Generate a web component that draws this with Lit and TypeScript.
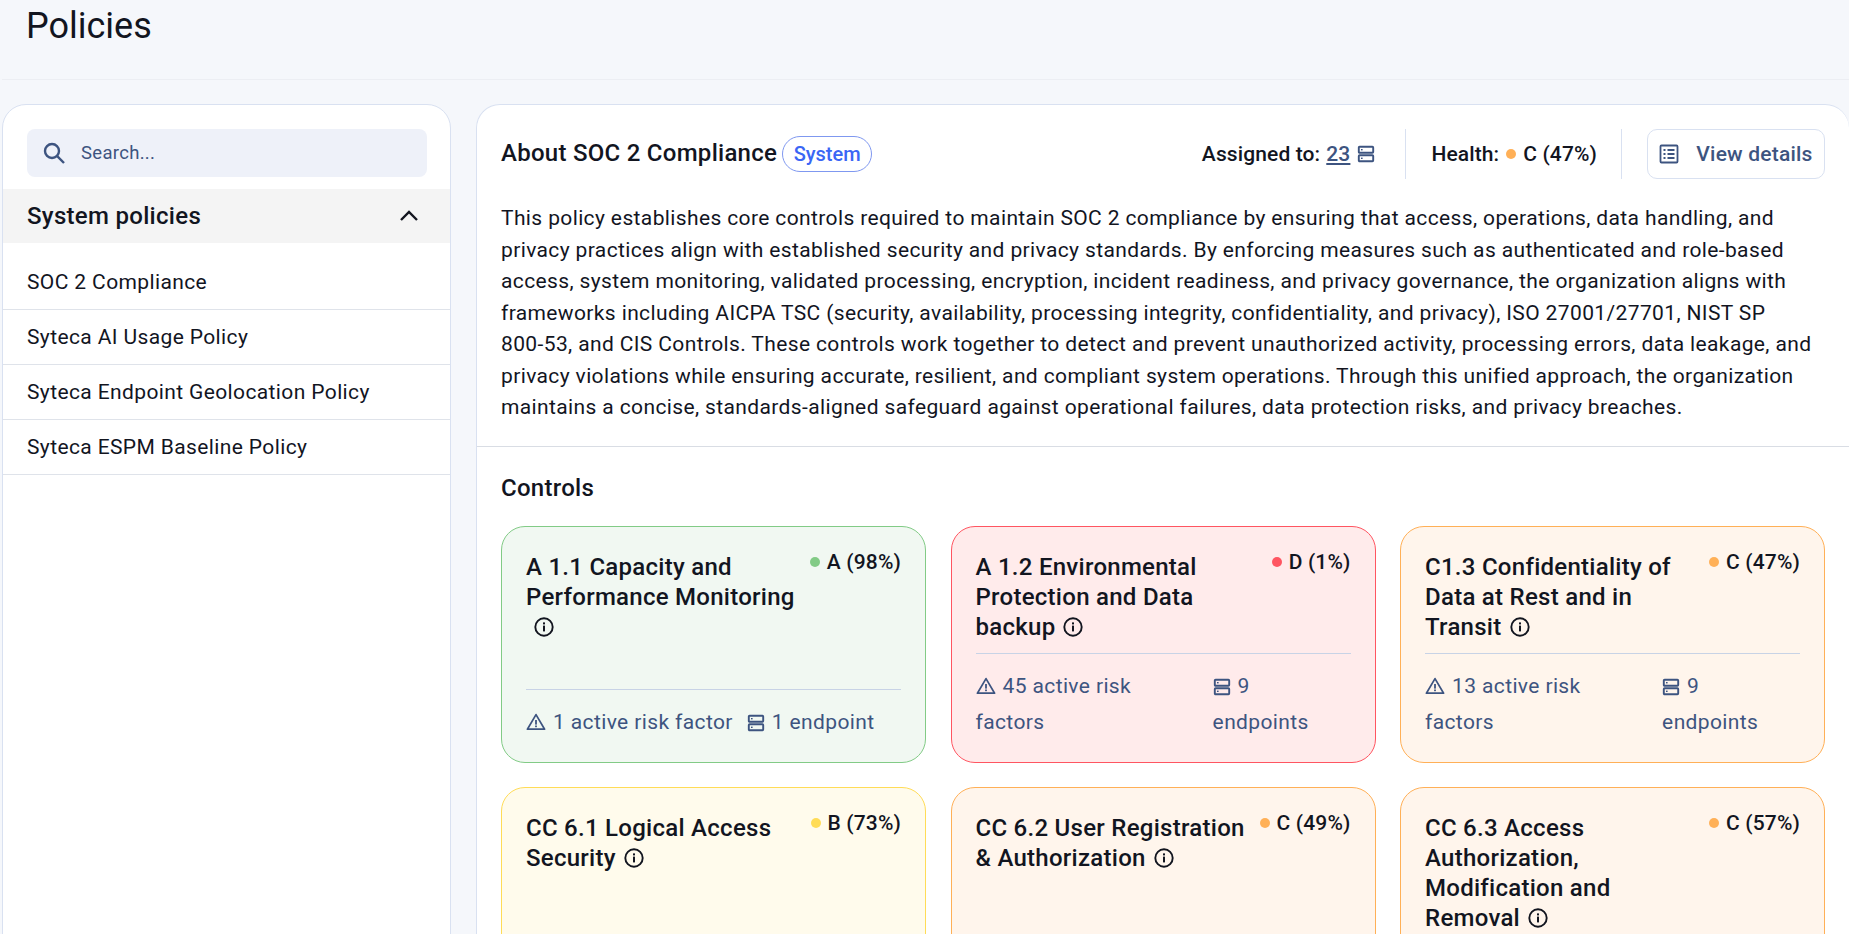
import { LitElement, html, css } from "lit";
import { customElement } from "lit/decorators.js";

const infoIcon = html`<svg class="info" viewBox="0 0 20 20" width="20" height="20" fill="none"><circle cx="10" cy="10" r="8.7" stroke="currentColor" stroke-width="1.9"/><rect x="9" y="8.6" width="2" height="5.8" fill="currentColor"/><rect x="9" y="5.4" width="2" height="2" fill="currentColor"/></svg>`;
const warnIcon = html`<svg class="mi" viewBox="0 0 20 20" width="20" height="20" fill="none"><path d="M10 2.6 L18.6 17.2 H1.4 Z" stroke="currentColor" stroke-width="1.7" stroke-linejoin="round"/><rect x="9.1" y="8" width="1.8" height="4.6" fill="currentColor"/><rect x="9.1" y="13.5" width="1.8" height="1.7" fill="currentColor"/></svg>`;
const serverIcon = html`<svg class="mi" viewBox="0 0 18 18" width="18" height="18" fill="none"><rect x="1.8" y="1.8" width="14.4" height="5.9" rx=".8" stroke="currentColor" stroke-width="1.9"/><rect x="1.8" y="10.3" width="14.4" height="5.9" rx=".8" stroke="currentColor" stroke-width="1.9"/><rect x="4" y="4" width="1.6" height="1.4" fill="currentColor"/><rect x="4" y="12.6" width="1.6" height="1.4" fill="currentColor"/></svg>`;

interface Ctl { t: string; g: string; c: string; r?: string; e?: string; }
const controls: Ctl[] = [
  { t: "A 1.1 Capacity and Performance Monitoring", g: "A (98%)", c: "a", r: "1 active risk factor", e: "1 endpoint" },
  { t: "A 1.2 Environmental Protection and Data backup", g: "D (1%)", c: "d", r: "45 active risk factors", e: "9 endpoints" },
  { t: "C1.3 Confidentiality of Data at Rest and in Transit", g: "C (47%)", c: "c", r: "13 active risk factors", e: "9 endpoints" },
  { t: "CC 6.1 Logical Access Security", g: "B (73%)", c: "b" },
  { t: "CC 6.2 User Registration & Authorization", g: "C (49%)", c: "c" },
  { t: "CC 6.3 Access Authorization, Modification and Removal", g: "C (57%)", c: "c" },
];

@customElement("app-root")
export class AppRoot extends LitElement {
  static styles = css`
    :host { display: block; height: 934px; overflow: hidden; background: #f5f7fb; font-family: Roboto, "Liberation Sans", sans-serif; color: #12151f; }
    * { box-sizing: border-box; }
    .top { height: 80px; margin-left: 2px; border-bottom: 1px solid #eceef3; padding: 4px 0 0 24px; }
    h1 { margin: 0; font-size: 36px; line-height: 44px; font-weight: 400; }
    .body { display: flex; gap: 25px; padding: 24px 0 0 2px; }
    .side { width: 449px; height: 900px; flex: none; background: #fff; border: 1px solid #d9e1f1; border-radius: 24px; padding-top: 24px; }
    .search { height: 48px; width: 400px; margin-left: 24px; background: #eef1f9; border-radius: 8px; display: flex; align-items: center; padding-left: 15px; gap: 15px; color: #3d5480; font-size: 18.5px; letter-spacing: .3px; }
    .sec { margin-top: 12px; height: 54px; background: #f4f4f4; display: flex; align-items: center; justify-content: space-between; padding: 0 32px 0 24px; font-size: 24px; letter-spacing: .3px; font-weight: 500; }
    .item { height: 55px; border-bottom: 1px solid #dfe3ea; display: flex; align-items: center; padding-left: 24px; font-size: 21px; letter-spacing: .38px; }
    .list { padding-top: 12px; }
    .main { flex: 1; height: 900px; background: #fff; border: 1px solid #d9e1f1; border-right: none; border-radius: 24px 24px 0 0; min-width: 0; }
    .head { display: flex; align-items: center; height: 50px; margin: 24px 24px 0 24px; }
    .head h2 { margin: -2px 0 0; font-size: 24px; letter-spacing: .27px; font-weight: 500; line-height: 30px; }
    .pill { margin-left: 5px; height: 36px; width: 90px; border: 1px solid #7f98f0; border-radius: 18px; color: #3a66f5; font-size: 20px; display: flex; align-items: center; justify-content: center; font-weight: 500; }
    .sp { flex: 1; }
    .stat { font-size: 21px; letter-spacing: .12px; font-weight: 500; display: flex; align-items: center; gap: 6px; height: 50px; }
    .stat.h { gap: 7px; }
    .stat a { color: #3d5480; text-decoration: underline; font-weight: 500; }
    .stat .mi { color: #3d5480; margin: 0 6px 0 1px; }
    .v { width: 1px; height: 50px; background: #d9e1f1; margin: 0 25px 0 24px; }
    .dot { width: 10px; height: 10px; border-radius: 50%; flex: none; display: inline-block; }
    .btn { width: 178px; height: 50px; border: 1px solid #d9e1f1; border-radius: 10px; display: flex; align-items: center; justify-content: center; gap: 17px; font-size: 21px; letter-spacing: .2px; font-weight: 500; color: #3d5480; }
    p { margin: 24px 24px 0 24px; font-size: 21px; letter-spacing: .375px; line-height: 31.5px; padding-bottom: 22px; }
    .nb { white-space: nowrap; }
    .rule { height: 1px; background: #d9dde4; }
    .ch { margin: 26px 0 0 24px; font-size: 24px; letter-spacing: .27px; font-weight: 500; line-height: 30px; }
    .grid { display: grid; grid-template-columns: repeat(3, 1fr); gap: 24.5px; margin: 23px 24px 0 24px; }
    .card { height: 237px; border: 1px solid; border-radius: 24px; padding: 25px 24px 0 24px; display: flex; flex-direction: column; }
    .card.a { background: #f1f8f2; border-color: #82cb86; }
    .card.d { background: #ffebeb; border-color: #ff5561; }
    .card.c { background: #fff5ec; border-color: #ffb057; }
    .card.b { background: #fffbec; border-color: #ffdc57; }
    .t { display: flex; justify-content: space-between; flex: 1; min-height: 0; gap: 8px; }
    .title { font-size: 24px; letter-spacing: .27px; line-height: 30px; font-weight: 500; flex: 1; }
    .info { vertical-align: -2px; margin-left: 8px; }
    .g { display: flex; align-items: center; gap: 7px; margin-top: -2px; font-size: 21px; letter-spacing: .15px; font-weight: 500; height: 24px; flex: none; white-space: nowrap; }
    .dot.d { background: #ff5561; }
    .dot.c { background: #ffb057; }
    .dot.b { background: #ffdc57; }
    .dot.a { background: #82cb86; }
    .meta { border-top: 1px solid #c8d3e6; margin-top: 9px; padding: 14px 0 22px; display: flex; gap: 14px; color: #3d5480; font-size: 21px; letter-spacing: .38px; line-height: 36px; }
    .m1 { flex-shrink: 4; }
    .mi { vertical-align: -3px; margin-right: 7px; }
  `;
  render() {
    return html`
      <div class="top"><h1>Policies</h1></div>
      <div class="body">
        <aside class="side">
          <div class="search">
            <svg viewBox="0 0 24 24" width="24" height="24" fill="none" stroke="#3d5480" stroke-width="2.4"><circle cx="10" cy="10" r="7"/><path d="M15.2 15.2 L22 22"/></svg>
            <span>Search...</span>
          </div>
          <div class="sec"><span>System policies</span>
            <svg viewBox="0 0 18 12" width="18" height="12" fill="none" stroke="#12151f" stroke-width="2.4"><path d="M1 10 L9 2 L17 10"/></svg>
          </div>
          <div class="list">
            ${["SOC 2 Compliance", "Syteca AI Usage Policy", "Syteca Endpoint Geolocation Policy", "Syteca ESPM Baseline Policy"].map((s) => html`<div class="item">${s}</div>`)}
          </div>
        </aside>
        <main class="main">
          <div class="head">
            <h2>About SOC 2 Compliance</h2><span class="pill">System</span>
            <span class="sp"></span>
            <div class="stat"><span>Assigned to:</span><a>23</a>${serverIcon}</div>
            <div class="v"></div>
            <div class="stat h"><span>Health:</span><span class="dot c"></span><span>C (47%)</span></div>
            <div class="v"></div>
            <div class="btn"><svg viewBox="0 0 20 20" width="20" height="20" fill="none" stroke="#3d5480" stroke-width="1.8"><rect x="1.5" y="1.5" width="17" height="17" rx="1"/><path d="M4.5 6H6.5M8.5 6H15.5M4.5 10H6.5M8.5 10H15.5M4.5 14H6.5M8.5 14H15.5"/></svg><span>View details</span></div>
          </div>
          <p>This policy establishes core controls required to maintain SOC 2 compliance by ensuring that access, operations, data handling, and privacy practices align with established security and privacy standards. By enforcing measures such as authenticated and role-based access, system monitoring, validated processing, encryption, incident readiness, and privacy governance, the organization aligns with frameworks including AICPA TSC (security, availability, processing integrity, confidentiality, and privacy), ISO 27001/27701, NIST SP <span class="nb">800-53</span>, and CIS Controls. These controls work together to detect and prevent unauthorized activity, processing errors, data leakage, and privacy violations while ensuring accurate, resilient, and compliant system operations. Through this unified approach, the organization maintains a concise, standards-aligned safeguard against operational failures, data protection risks, and privacy breaches.</p>
          <div class="rule"></div>
          <div class="ch">Controls</div>
          <div class="grid">
            ${controls.map((c) => html`
              <div class="card ${c.c}">
                <div class="t"><div class="title">${c.t}${infoIcon}</div><div class="g"><span class="dot ${c.c}"></span>${c.g}</div></div>
                ${c.r ? html`<div class="meta"><div class="m1">${warnIcon}${c.r}</div><div>${serverIcon}${c.e}</div></div>` : ""}
              </div>`)}
          </div>
        </main>
      </div>`;
  }
}
